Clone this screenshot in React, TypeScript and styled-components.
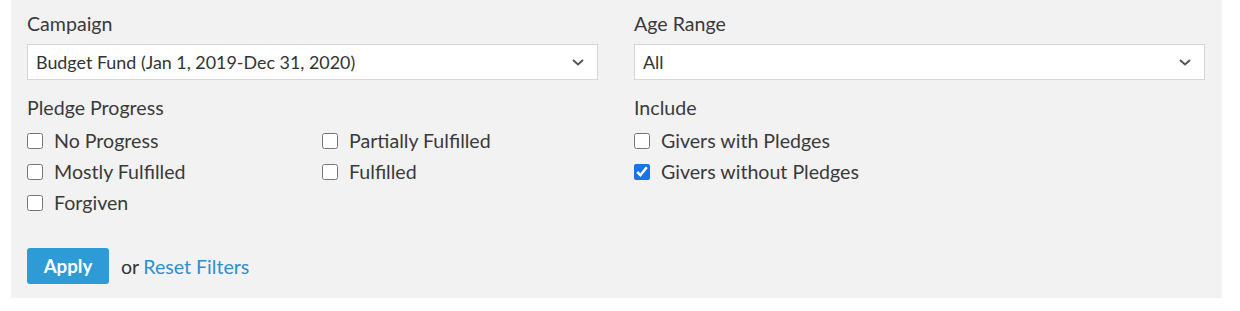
import styled, { createGlobalStyle } from "styled-components";

const GlobalStyle = createGlobalStyle`
  body {
    margin: 0;
    background: #ffffff;
    font-family: Lato, "Open Sans", sans-serif;
  }
`;

type Option = { label: string; checked?: boolean };

const pledgeLeft: Option[] = [
  { label: "No Progress" },
  { label: "Mostly Fulfilled" },
  { label: "Forgiven" },
];
const pledgeRight: Option[] = [
  { label: "Partially Fulfilled" },
  { label: "Fulfilled" },
];
const includeOptions: Option[] = [
  { label: "Givers with Pledges" },
  { label: "Givers without Pledges", checked: true },
];

const Chevron = () => (
  <svg width="14" height="9" viewBox="0 0 14 9" fill="none">
    <path d="M2 2L7 6.5L12 2" stroke="#555" strokeWidth="2" />
  </svg>
);

const CheckList = ({ options }: { options: Option[] }) => (
  <List>
    {options.map((o) => (
      <CheckRow key={o.label}>
        <Box type="checkbox" defaultChecked={o.checked} />
        {o.label}
      </CheckRow>
    ))}
  </List>
);

export default function App() {
  return (
    <>
      <GlobalStyle />
      <Panel>
        <Grid>
          <Field>
            <Label>Campaign</Label>
            <Select>
              <span>Budget Fund (Jan 1, 2019-Dec 31, 2020)</span>
              <Chevron />
            </Select>
          </Field>
          <Field>
            <Label>Age Range</Label>
            <Select>
              <span>All</span>
              <Chevron />
            </Select>
          </Field>
          <Field>
            <Label $tight>Pledge Progress</Label>
            <Columns>
              <CheckList options={pledgeLeft} />
              <CheckList options={pledgeRight} />
            </Columns>
          </Field>
          <Field>
            <Label $tight>Include</Label>
            <CheckList options={includeOptions} />
          </Field>
        </Grid>
        <Actions>
          <ApplyBtn>Apply</ApplyBtn>
          <span>or</span>
          <ResetLink href="#">Reset Filters</ResetLink>
        </Actions>
      </Panel>
    </>
  );
}

const Panel = styled.div`
  margin-left: 11px;
  width: 1211px;
  height: 298px;
  box-sizing: border-box;
  background: #f2f2f2;
  padding: 12px 17px 0 16px;
  color: #333;
`;

const Grid = styled.div`
  display: grid;
  grid-template-columns: 1fr 1fr;
  column-gap: 36px;
  row-gap: 16px;
`;

const Field = styled.div`
  display: flex;
  flex-direction: column;
`;

const Label = styled.div<{ $tight?: boolean }>`
  font-size: 19.6px;
  line-height: 24px;
  margin-bottom: ${({ $tight }) => ($tight ? "5px" : "8px")};
  color: #3a3a3a;
`;

const Select = styled.div`
  height: 36px;
  box-sizing: border-box;
  background: #fff;
  border: 1px solid #d6d6d6;
  display: flex;
  align-items: center;
  justify-content: space-between;
  padding: 0 12px 0 8px;
  font-size: 17.9px;
  color: #333;
`;

const Columns = styled.div`
  display: grid;
  grid-template-columns: 295px 1fr;
`;

const List = styled.div`
  display: flex;
  flex-direction: column;
`;

const CheckRow = styled.label`
  display: flex;
  align-items: center;
  height: 31px;
  font-size: 19.6px;
  color: #3a3a3a;
`;

const Box = styled.input`
  width: 16px;
  height: 16px;
  margin: 0 11px 0 0;
  accent-color: #1a73e8;
`;

const Actions = styled.div`
  display: flex;
  align-items: center;
  gap: 12px;
  margin-top: 30px;
  font-size: 19.6px;
  color: #333;
`;

const ApplyBtn = styled.button`
  width: 82px;
  height: 36px;
  border: none;
  border-radius: 3px;
  background: #2e9ad6;
  color: #fff;
  font-family: inherit;
  font-weight: 700;
  font-size: 18.7px;
`;

const ResetLink = styled.a`
  color: #2e8fcc;
  text-decoration: none;
  margin-left: -8px;
`;
